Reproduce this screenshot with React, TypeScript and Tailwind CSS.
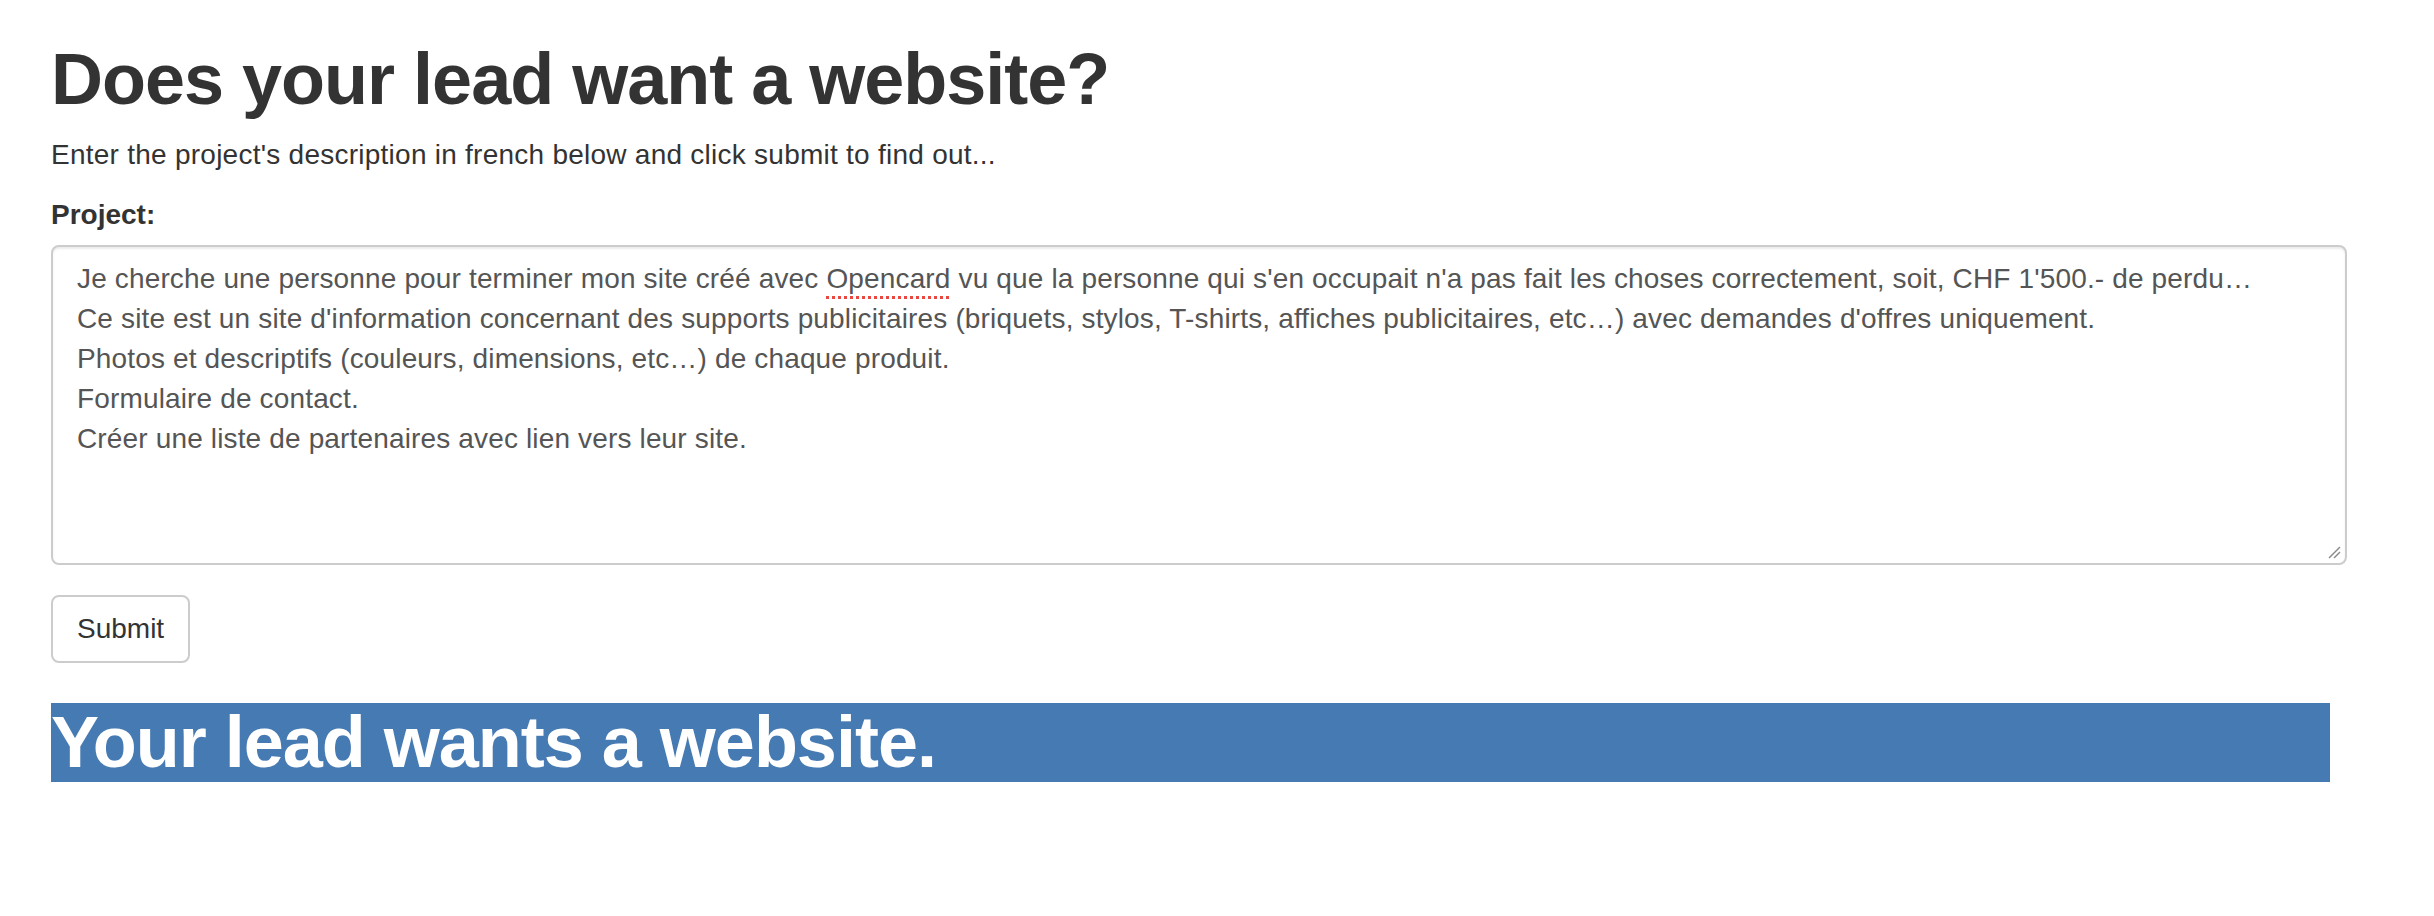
import React from 'react';

const lines = [
    'Ce site est un site d\'information concernant des supports publicitaires (briquets, stylos, T-shirts, affiches publicitaires, etc…) avec demandes d\'offres uniquement.',
    'Photos et descriptifs (couleurs, dimensions, etc…) de chaque produit.',
    'Formulaire de contact.',
    'Créer une liste de partenaires avec lien vers leur site.',
];

const ResizeGrip: React.FC = () => (
    <svg width="14" height="14" viewBox="0 0 14 14" className="absolute right-[4px] bottom-[4px]">
        <line x1="2" y1="13" x2="13" y2="2" stroke="#8a8a8a" strokeWidth="1.5" />
        <line x1="7" y1="13" x2="13" y2="7" stroke="#8a8a8a" strokeWidth="1.5" />
    </svg>
);

export default function App() {
    return (
        <div className="min-h-screen bg-white pl-[51px] pr-[87px] font-['Liberation_Sans',Arial,sans-serif] text-[28px] leading-[40px] text-[#333]">
            <h1 className="mt-[40px] mb-[16px] text-[72px] leading-[1.1] font-bold tracking-[-1px] text-[#333]">
                Does your lead want a website?
            </h1>
            <p className="mb-[20px] tracking-[0.25px]">Enter the project's description in french below and click submit to find out...</p>

            {/* Form */}
            <div className="mb-[30px]">
                <label className="mb-[10px] block font-bold">Project:</label>
                <div className="relative h-[320px] rounded-[8px] border-2 border-[#ccc] bg-white px-[24px] py-[12px] tracking-[0.15px] text-[#555] shadow-[inset_0_2px_2px_rgba(0,0,0,0.075)]">
                    <div className="whitespace-pre">
                        Je cherche une personne pour terminer mon site créé avec{' '}
                        <span className="underline decoration-dotted decoration-[#e8483f] decoration-[3px] underline-offset-[8px]">Opencard</span>
                        {' '}vu que la personne qui s'en occupait n'a pas fait les choses correctement, soit, CHF 1'500.- de perdu…
                    </div>
                    {lines.map((line, idx) => (
                        <div key={idx} className="whitespace-pre">{line}</div>
                    ))}
                    <ResizeGrip />
                </div>
            </div>

            <button className="h-[68px] rounded-[8px] border-2 border-[#ccc] bg-white px-[24px] text-[28px] text-[#333]">
                Submit
            </button>

            {/* Result */}
            <div className="mt-[40px] mr-[17px] bg-[#467ab3]">
                <h1 className="text-[72px] leading-[1.1] font-bold tracking-[-1px] text-white">Your lead wants a website.</h1>
            </div>
        </div>
    );
}
